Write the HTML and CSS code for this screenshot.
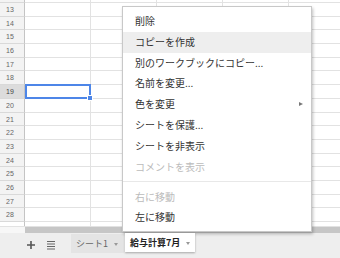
FILE: index.html
```html
<!DOCTYPE html>
<html lang="ja">
<head>
<meta charset="utf-8">
<link rel="stylesheet" href="styles.css">
</head>
<body>
<div class="app">
  <div class="grid">
    <div class="rows">
      <div class="row"><div class="rh"></div><div class="c"></div><div class="c"></div><div class="c"></div><div class="c"></div><div class="c last"></div></div>
      <div class="row"><div class="rh">13</div><div class="c"></div><div class="c"></div><div class="c"></div><div class="c"></div><div class="c last"></div></div>
      <div class="row"><div class="rh">14</div><div class="c"></div><div class="c"></div><div class="c"></div><div class="c"></div><div class="c last"></div></div>
      <div class="row"><div class="rh">15</div><div class="c"></div><div class="c"></div><div class="c"></div><div class="c"></div><div class="c last"></div></div>
      <div class="row"><div class="rh">16</div><div class="c"></div><div class="c"></div><div class="c"></div><div class="c"></div><div class="c last"></div></div>
      <div class="row"><div class="rh">17</div><div class="c"></div><div class="c"></div><div class="c"></div><div class="c"></div><div class="c last"></div></div>
      <div class="row"><div class="rh">18</div><div class="c"></div><div class="c"></div><div class="c"></div><div class="c"></div><div class="c last"></div></div>
      <div class="row"><div class="rh active">19</div><div class="c sel"></div><div class="c"></div><div class="c"></div><div class="c"></div><div class="c last"></div></div>
      <div class="row"><div class="rh">20</div><div class="c"></div><div class="c"></div><div class="c"></div><div class="c"></div><div class="c last"></div></div>
      <div class="row"><div class="rh">21</div><div class="c"></div><div class="c"></div><div class="c"></div><div class="c"></div><div class="c last"></div></div>
      <div class="row"><div class="rh">22</div><div class="c"></div><div class="c"></div><div class="c"></div><div class="c"></div><div class="c last"></div></div>
      <div class="row"><div class="rh">23</div><div class="c"></div><div class="c"></div><div class="c"></div><div class="c"></div><div class="c last"></div></div>
      <div class="row"><div class="rh">24</div><div class="c"></div><div class="c"></div><div class="c"></div><div class="c"></div><div class="c last"></div></div>
      <div class="row"><div class="rh">25</div><div class="c"></div><div class="c"></div><div class="c"></div><div class="c"></div><div class="c last"></div></div>
      <div class="row"><div class="rh">26</div><div class="c"></div><div class="c"></div><div class="c"></div><div class="c"></div><div class="c last"></div></div>
      <div class="row"><div class="rh">27</div><div class="c"></div><div class="c"></div><div class="c"></div><div class="c"></div><div class="c last"></div></div>
      <div class="row"><div class="rh">28</div><div class="c"></div><div class="c"></div><div class="c"></div><div class="c"></div><div class="c last"></div></div>
      <div class="row"><div class="rh blank"></div><div class="c"></div><div class="c"></div><div class="c"></div><div class="c"></div><div class="c last"></div></div>
    </div>
  </div>
  <div class="hscroll"><div class="corner"></div><div class="track"></div></div>
  <div class="tabbar">
    <div class="tool plus">
      <svg width="10" height="10" viewBox="0 0 10 10"><path d="M5 1v8M1 5h8" stroke="#555" stroke-width="1.6" fill="none"/></svg>
    </div>
    <div class="tool list">
      <svg width="10" height="10" viewBox="0 0 10 10"><path d="M1 1.5h8M1 4h8M1 6.5h8M1 9h8" stroke="#666" stroke-width="1.2" fill="none"/></svg>
    </div>
    <div class="tab">シート1<span class="caret"></span></div>
    <div class="tab current">給与計算7月<span class="caret"></span></div>
  </div>
  <div class="menu">
    <div class="item">削除</div>
    <div class="item hover">コピーを作成</div>
    <div class="item">別のワークブックにコピー...</div>
    <div class="item">名前を変更...</div>
    <div class="item sub">色を変更<span class="arrow"></span></div>
    <div class="item">シートを保護...</div>
    <div class="item">シートを非表示</div>
    <div class="item disabled">コメントを表示</div>
    <div class="sep"></div>
    <div class="item disabled">右に移動</div>
    <div class="item">左に移動</div>
  </div>
</div>
</body>
</html>
```

FILE: styles.css
```css
html, body {
  margin: 0;
  padding: 0;
}
body {
  width: 340px;
  height: 258px;
  overflow: hidden;
  background: #fff;
  font-family: "Noto Sans CJK JP", "Liberation Sans", sans-serif;
}
.app {
  position: relative;
  width: 340px;
  height: 258px;
  display: flex;
  flex-direction: column;
}
.grid {
  height: 226px;
  overflow: hidden;
  flex: none;
}
.rows {
  margin-top: -10.7px;
  display: flex;
  flex-direction: column;
}
.row {
  display: flex;
  height: 13.7px;
  flex: none;
}
.rh {
  width: 25px;
  box-sizing: border-box;
  background: #f3f3f3;
  border-right: 1px solid #c4c4c4;
  border-bottom: 1px solid #d9d9d9;
  font-family: "Liberation Sans", Arial, sans-serif;
  font-size: 7px;
  color: #666;
  text-align: center;
  padding-right: 4px;
  line-height: 13px;
  flex: none;
}
.rh.active {
  background: #dcdcdc;
  color: #444;
}
.rh.blank {
  background: #fff;
}
.c {
  width: 66px;
  box-sizing: border-box;
  border-right: 1px solid #e2e2e2;
  border-bottom: 1px solid #e2e2e2;
  flex: none;
}
.c.last {
  flex: 1;
  border-right: none;
}
.c.sel {
  position: relative;
}
.c.sel::before {
  content: "";
  position: absolute;
  left: 0;
  top: -1px;
  right: -1px;
  bottom: -1px;
  border: 2px solid #4d86e8;
}
.c.sel::after {
  content: "";
  position: absolute;
  right: -3px;
  bottom: -3px;
  width: 4px;
  height: 4px;
  background: #4d86e8;
  border: 1px solid #fff;
  box-sizing: content-box;
  z-index: 1;
}
.hscroll {
  height: 6px;
  display: flex;
  flex: none;
  border-top: 1px solid #e2e2e2;
}
.corner {
  width: 25px;
  background: #f7f7f7;
}
.track {
  flex: 1;
  background: #c6c6c6;
}
.tabbar {
  flex: 1;
  background: #eeeeee;
  display: flex;
  align-items: flex-start;
  padding-left: 26px;
}
.tool {
  width: 10px;
  height: 10px;
  margin-top: 7px;
  display: flex;
}
.tool.list {
  margin-left: 10px;
  margin-right: 15px;
}
.tab {
  height: 19px;
  margin-top: 1px;
  box-sizing: border-box;
  padding: 0 6px 0 5px;
  background: #e4e4e4;
  font-size: 9px;
  line-height: 19px;
  color: #666;
  display: flex;
  align-items: center;
  white-space: nowrap;
}
.tab.current {
  margin-left: 1px;
  margin-top: 0;
  background: #fff;
  color: #222;
  font-weight: bold;
  padding: 0 5px 0 5px;
  box-shadow: 0 1px 2px rgba(0,0,0,0.3);
  position: relative;
  z-index: 3;
}
.caret {
  width: 0;
  height: 0;
  margin-left: 6px;
  margin-top: 1px;
  border-left: 2.5px solid transparent;
  border-right: 2.5px solid transparent;
  border-top: 3px solid #999;
}
.menu {
  position: absolute;
  left: 122px;
  top: 6px;
  width: 190px;
  height: 226px;
  box-sizing: border-box;
  background: #fff;
  border: 1px solid #c8c8c8;
  box-shadow: 1px 2px 3px rgba(0,0,0,0.25);
  padding: 4px 0;
  z-index: 2;
}
.item {
  height: 20.8px;
  line-height: 20.8px;
  padding-left: 12px;
  font-size: 10px;
  color: #333;
  position: relative;
  white-space: nowrap;
}
.item.hover {
  background: #eeeeee;
}
.item.disabled {
  color: #bbbbbb;
}
.arrow {
  position: absolute;
  right: 8px;
  top: 8px;
  width: 0;
  height: 0;
  border-top: 2.5px solid transparent;
  border-bottom: 2.5px solid transparent;
  border-left: 4px solid #777;
}
.sep {
  height: 1px;
  background: #e8e8e8;
  margin: 4px 0 4.2px;
}
```
